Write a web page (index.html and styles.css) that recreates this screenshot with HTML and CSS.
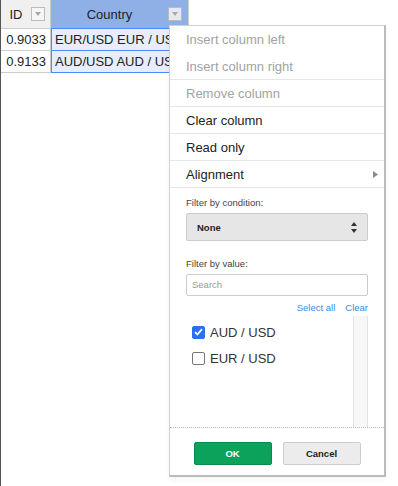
FILE: index.html
```html
<!DOCTYPE html>
<html>
<head>
<meta charset="utf-8">
<link rel="stylesheet" href="styles.css">
</head>
<body>
<div class="page">
  <div class="grid">
    <div class="hcell hid"><span class="htext">ID</span><span class="hbtn"><svg width="6" height="4" viewBox="0 0 6 4"><path d="M0 0H6L3 4Z" fill="#a8a8a8"/></svg></span></div>
    <div class="hcell hcountry"><span class="htext">Country</span><span class="hbtn"><svg width="6" height="4" viewBox="0 0 6 4"><path d="M0 0H6L3 4Z" fill="#a8a8a8"/></svg></span></div>
    <div class="cell num">0.9033</div>
    <div class="cell sel">EUR/USD EUR / USD</div>
    <div class="cell num">0.9133</div>
    <div class="cell sel">AUD/USD AUD / USD</div>
  </div>
</div>

<div class="menu">
  <ul class="items">
    <li class="item disabled first">Insert column left</li>
    <li class="item disabled">Insert column right</li>
    <li class="item disabled">Remove column</li>
    <li class="item">Clear column</li>
    <li class="item">Read only</li>
    <li class="item sub">Alignment<svg class="subarrow" width="5" height="7" viewBox="0 0 5 7"><path d="M0 0L5 3.5L0 7Z" fill="#8a8a8a"/></svg></li>
  </ul>
  <div class="filters">
    <div class="label">Filter by condition:</div>
    <div class="select"><span>None</span><svg width="6" height="11" viewBox="0 0 6 11"><path d="M3 0L6 4H0Z M0 7H6L3 11Z" fill="#333"/></svg></div>
    <div class="label label2">Filter by value:</div>
    <div class="search">Search</div>
    <div class="links"><span>Select all</span><span>Clear</span></div>
    <div class="list">
      <div class="options">
        <label class="opt"><span class="box checked"><svg width="9" height="8" viewBox="0 0 9 8"><path d="M1 4.2L3.4 6.5L8 1.2" fill="none" stroke="#fff" stroke-width="1.8"/></svg></span>AUD / USD</label>
        <label class="opt"><span class="box"></span>EUR / USD</label>
      </div>
      <div class="track"></div>
    </div>
  </div>
  <div class="footer">
    <span class="btn ok">OK</span>
    <span class="btn cancel">Cancel</span>
  </div>
</div>
</body>
</html>
```
FILE: styles.css
```css
html, body {
  margin: 0;
  padding: 0;
  background: #fff;
  font-family: "Liberation Sans", Arial, sans-serif;
}
.page {
  min-height: 486px;
  border-left: 1px solid #555;
  box-sizing: border-box;
}
.grid {
  display: grid;
  grid-template-columns: 50px 138px;
  grid-template-rows: 29px 22px 22px;
  font-size: 13px;
  color: #222;
}
.hcell {
  display: flex;
  align-items: center;
  box-sizing: border-box;
  border-right: 1px solid #ccc;
  border-bottom: 1px solid #ccc;
  background: #f0f0f0;
}
.hcountry {
  background: #8eb0e7;
  border-bottom-color: #4b89ff;
}
.htext {
  flex: 1;
  text-align: center;
}
.hbtn {
  width: 14px;
  height: 14px;
  box-sizing: border-box;
  border: 1px solid #bbb;
  background: #f6f6f6;
  display: flex;
  align-items: center;
  justify-content: center;
  margin-right: 5px;
}
.hcountry .hbtn {
  margin-right: 6px;
  background: #e4e9f3;
}
.cell {
  box-sizing: border-box;
  border-right: 1px solid #ccc;
  border-bottom: 1px solid #ccc;
  line-height: 21px;
  padding: 0 4px;
  white-space: nowrap;
  overflow: hidden;
}
.num {
  text-align: right;
}
.sel {
  background: #e8edfd;
  border-bottom-color: #4b89ff;
  box-shadow: inset 1px 0 0 #4b89ff;
  padding-left: 4px;
}
.menu {
  position: absolute;
  left: 169px;
  top: 25px;
  width: 217px;
  box-sizing: border-box;
  background: #fff;
  border: 1px solid #d0d0d0;
  border-right: 2px solid #bbb;
  border-bottom: 2px solid #bbb;
  box-shadow: 0 3px 6px rgba(0,0,0,0.04);
}
.items {
  list-style: none;
  margin: 0;
  padding: 0;
}
.item {
  height: 27px;
  box-sizing: border-box;
  border-bottom: 1px solid #e6e6e6;
  padding: 0 16px;
  display: flex;
  align-items: center;
  font-size: 13px;
  color: #222;
}
.item.first {
  border-bottom: none;
}
.item.disabled {
  color: #a2a2a2;
}
.sub {
  justify-content: space-between;
  padding-right: 6px;
}
.filters {
  padding: 0 16px;
  font-size: 9.5px;
  color: #333;
}
.label {
  margin-top: 9px;
  line-height: 12px;
  color: #444;
}
.label2 {
  margin-top: 17px;
}
.select {
  margin-top: 4px;
  height: 28px;
  box-sizing: border-box;
  background: #e6e6e6;
  border: 1px solid #ccc;
  border-radius: 2px;
  display: flex;
  align-items: center;
  justify-content: space-between;
  padding: 0 10px;
  font-weight: bold;
  color: #222;
}
.search {
  margin-top: 4px;
  height: 22px;
  box-sizing: border-box;
  border: 1px solid #ccc;
  border-radius: 2px;
  padding: 0 5px;
  line-height: 20px;
  color: #999;
}
.links {
  margin-top: 6px;
  line-height: 12px;
  display: flex;
  justify-content: flex-end;
  gap: 10px;
  color: #3a8ae6;
}
.list {
  margin-top: 2px;
  height: 111px;
  display: flex;
}
.options {
  flex: 1;
  padding-top: 3px;
}
.opt {
  height: 26px;
  display: flex;
  align-items: center;
  padding-left: 6px;
  font-size: 13px;
  color: #333;
}
.box {
  width: 13px;
  height: 13px;
  box-sizing: border-box;
  border: 1px solid #777;
  border-radius: 2px;
  margin-right: 5px;
  display: flex;
  align-items: center;
  justify-content: center;
  background: #fff;
}
.box.checked {
  background: #2a6ff4;
  border-color: #2a6ff4;
}
.track {
  width: 15px;
  box-sizing: border-box;
  background: #f7f7f7;
  border-left: 1px solid #e4e4e4;
  border-right: 1px solid #e4e4e4;
}
.footer {
  border-top: 1px dotted #bbb;
  padding: 14px 0 10px;
  display: flex;
  justify-content: center;
  gap: 11px;
}
.btn {
  width: 78px;
  height: 23px;
  box-sizing: border-box;
  border-radius: 2px;
  display: flex;
  align-items: center;
  justify-content: center;
  font-size: 9.5px;
  font-weight: bold;
}
.ok {
  background: #0da25c;
  border: 1px solid #0a8a4c;
  color: #fff;
}
.cancel {
  background: #ececec;
  border: 1px solid #ccc;
  color: #222;
}
```
